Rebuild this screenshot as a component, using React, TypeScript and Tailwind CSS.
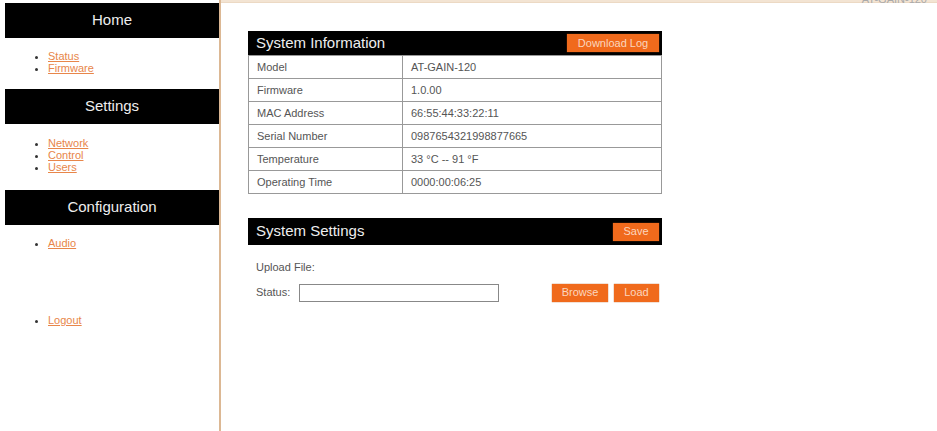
import React from 'react'

const sections = [
  { title: 'Home', links: ['Status', 'Firmware'], pad: 'pt-[12px]', gap: 'mb-[15px]' },
  { title: 'Settings', links: ['Network', 'Control', 'Users'], pad: 'pt-[13px]', gap: 'mb-[17px]' },
  { title: 'Configuration', links: ['Audio'], pad: 'pt-[12px]', gap: 'mb-[65px]' },
]

const info = [
  ['Model', 'AT-GAIN-120'],
  ['Firmware', '1.0.00'],
  ['MAC Address', '66:55:44:33:22:11'],
  ['Serial Number', '0987654321998877665'],
  ['Temperature', '33 °C -- 91 °F'],
  ['Operating Time', '0000:00:06:25'],
]

function NavLinks({ links }: { links: string[] }) {
  return (
    <ul className="list-disc pl-[43px] text-[11px] leading-[12px] marker:text-[#333]">
      {links.map((l) => (
        <li key={l}>
          <a href="#" className="text-[#e8864a] underline">
            {l}
          </a>
        </li>
      ))}
    </ul>
  )
}

function OrangeButton({ children, className = '' }: { children: React.ReactNode; className?: string }) {
  return (
    <button
      className={`h-[18px] bg-[#f06a1c] text-[11px] leading-none text-[#fbd6bf] shadow-[0_0_1px_#b44c10] ${className}`}
    >
      {children}
    </button>
  )
}

export default function App() {
  return (
    <div className="flex h-[431px] w-[937px] overflow-hidden bg-white font-['Liberation_Sans',Arial,sans-serif]">
      {/* left nav */}
      <aside className="w-[219px] shrink-0 pl-[5px] pt-[3px]">
        {sections.map((s) => (
          <div key={s.title}>
            <div className="flex h-[35px] items-center justify-center bg-black text-[15px] text-[#eee]">
              {s.title}
            </div>
            <div className={`${s.pad} ${s.gap}`}>
              <NavLinks links={s.links} />
            </div>
          </div>
        ))}
        <NavLinks links={['Logout']} />
      </aside>

      <div className="w-[2px] shrink-0 bg-[#dcb894]" />

      <main className="flex-1">
        {/* page title strip, mostly above the fold */}
        <div className="relative h-[3px] border-b border-[#ecd9c4] bg-[#f3e4d3]">
          <span className="absolute right-[10px] top-[-9px] text-[11px] text-[#aaa]">AT-GAIN-120</span>
        </div>

        <div className="ml-[27px] w-[414px] pt-[28px]">
          <section>
            <div className="flex h-[24px] items-center justify-between bg-black pl-[8px] pr-[3px]">
              <span className="text-[15px] text-[#eee]">System Information</span>
              <OrangeButton className="w-[92px]">Download Log</OrangeButton>
            </div>
            <table className="w-full border-collapse text-[11px] text-[#555]">
              <tbody>
                {info.map(([k, v]) => (
                  <tr key={k} className="h-[23px]">
                    <td className="w-[154px] border border-[#999] pl-[8px]">{k}</td>
                    <td className="border border-[#999] pl-[8px]">{v}</td>
                  </tr>
                ))}
              </tbody>
            </table>
          </section>

          <section className="mt-[24px]">
            <div className="flex h-[27px] items-center justify-between bg-black pl-[8px] pr-[3px]">
              <span className="text-[15px] text-[#eee]">System Settings</span>
              <OrangeButton className="w-[46px]">Save</OrangeButton>
            </div>
            <div className="pl-[8px] pt-[14px] text-[11px] text-[#555]">Upload File:</div>
            <div className="mt-[8px] flex items-center pl-[8px] pr-[3px]">
              <span className="text-[11px] text-[#555]">Status:</span>
              <input className="ml-[9px] h-[18px] w-[200px] border border-[#888] bg-white" />
              <div className="ml-auto flex gap-[6px]">
                <OrangeButton className="w-[56px]">Browse</OrangeButton>
                <OrangeButton className="w-[45px]">Load</OrangeButton>
              </div>
            </div>
          </section>
        </div>
      </main>
    </div>
  )
}
